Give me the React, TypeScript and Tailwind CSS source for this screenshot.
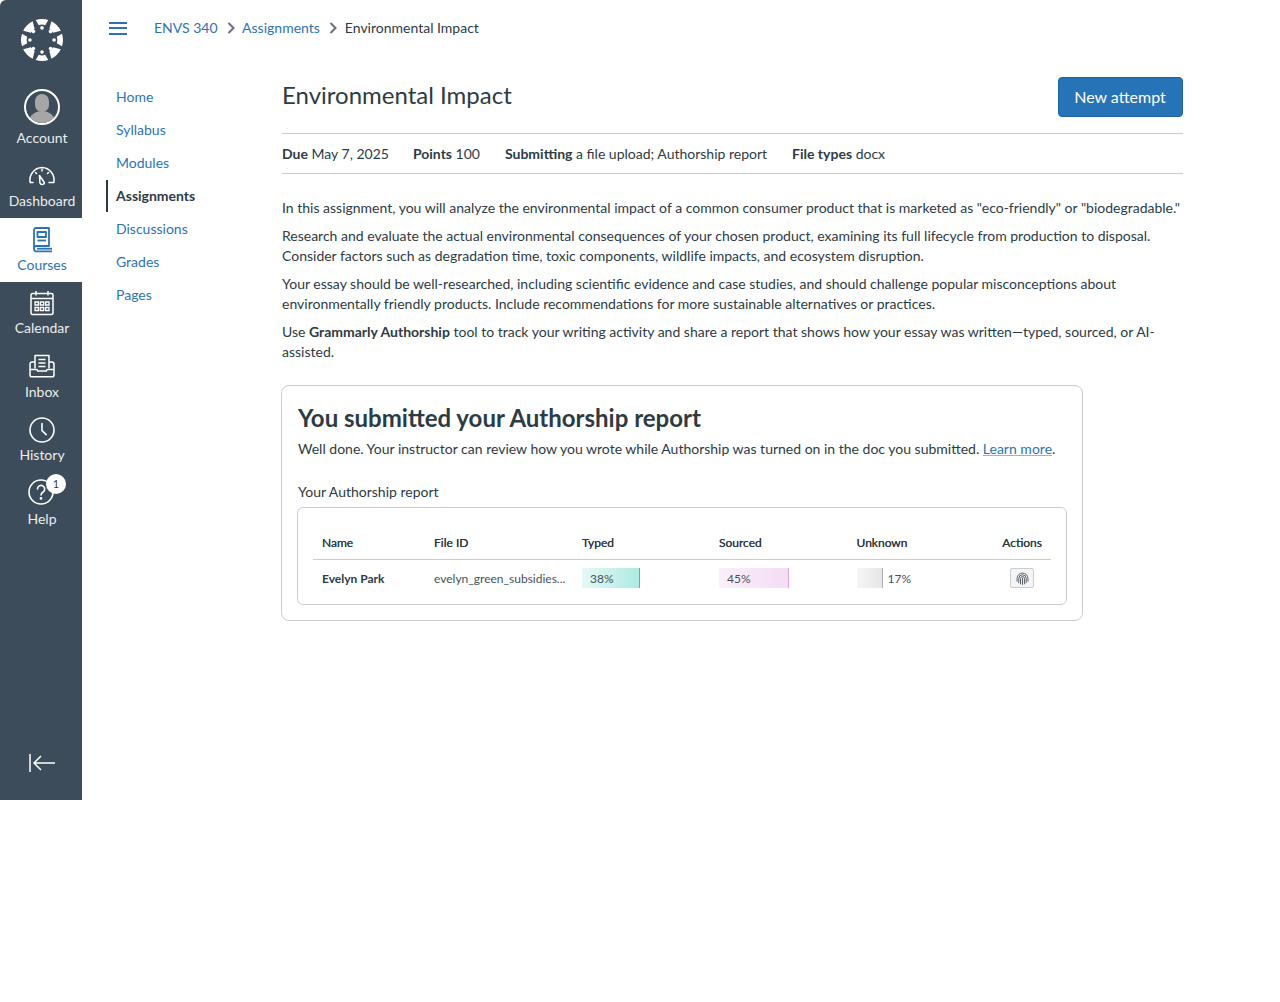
import React from "react";

const Logo = () => (
  <svg width="44" height="44" viewBox="0 0 44 44" fill="#fff">
    {[0, 90, 180, 270].map((a) => (
      <path key={a} transform={`rotate(${a} 22 22)`} d="M15.7 2 A21 21 0 0 1 28.3 2 L25.2 7.2 Q22 6 18.8 7.2 Z" />
    ))}
    {[45, 135, 225, 315].map((a) => (
      <path key={a} transform={`rotate(${a} 22 22)`} d="M15.3 2.1 A21 21 0 0 1 28.7 2.1 L24.6 9 Q22 8.1 19.4 9 Z" />
    ))}
    {[0, 45, 90, 135, 180, 225, 270, 315].map((a) => (
      <circle key={a} cx="22" cy="9.9" r="1.8" transform={`rotate(${a} 22 22)`} />
    ))}
  </svg>
);

const Dashboard = () => (
  <svg width="28" height="24" viewBox="0 0 28 24" fill="none" stroke="currentColor" strokeWidth="1.5" strokeLinecap="round" strokeLinejoin="round">
    <path d="M5 18.5H2.2 A12.5 12.5 0 0 1 14 3.5 A12.5 12.5 0 0 1 25.8 18.5H21" />
    <path d="M11.5 11.5l5 7.2a2.4 2.4 0 0 1-4.6 0z" />
    <path d="M14 5.5v1.5M7.5 8.5l1 1M20.5 8.5l-1 1" />
  </svg>
);

const Courses = () => (
  <svg width="24" height="26" viewBox="0 0 24 26" fill="none" stroke="currentColor" strokeWidth="1.8" strokeLinejoin="round">
    <path d="M4 20.5V3a2 2 0 0 1 2-2h13v18H6a2.5 2.5 0 0 0-2 2.7 2.5 2.5 0 0 0 2 2.6h16" />
    <path d="M7 21.7h15" />
    <rect x="7.5" y="5" width="8.5" height="5" />
    <path d="M7.5 13.5h8.5" />
  </svg>
);

const Calendar = () => (
  <svg width="24" height="26" viewBox="0 0 24 26" fill="none" stroke="currentColor" strokeWidth="1.5">
    <rect x="1" y="3.5" width="22" height="21" rx="1.5" />
    <path d="M1 8.5h22M6 1v4.5M18 1v4.5" />
    <path d="M5 12h3.4v3H5zM10.3 12h3.4v3h-3.4zM15.6 12H19v3h-3.4zM5 17.5h3.4v3H5zM10.3 17.5h3.4v3h-3.4zM15.6 17.5H19v3h-3.4z" strokeWidth="1.3" />
  </svg>
);

const Inbox = () => (
  <svg width="26" height="24" viewBox="0 0 26 24" fill="none" stroke="currentColor" strokeWidth="1.5" strokeLinejoin="round">
    <path d="M6 14.5V1.5h14v13" />
    <path d="M9.5 5.5h7M9.5 9h7M9.5 12.5h7" />
    <path d="M6 8H3.2Q1 8 1 10.5V21a1.8 1.8 0 0 0 1.8 1.8h20.4A1.8 1.8 0 0 0 25 21V10.5Q25 8 22.8 8H20" />
    <path d="M1 15.5h6.5a1 1 0 0 1 1 1v.5h9v-.5a1 1 0 0 1 1-1H25" />
  </svg>
);

const Clock = () => (
  <svg width="26" height="26" viewBox="0 0 26 26" fill="none" stroke="currentColor" strokeWidth="1.6" strokeLinecap="round">
    <circle cx="13" cy="13" r="12" />
    <path d="M13 6.5v7.2l4.2 4" />
  </svg>
);

const Help = () => (
  <svg width="26" height="26" viewBox="0 0 26 26" fill="none" stroke="currentColor" strokeWidth="1.6" strokeLinecap="round">
    <circle cx="13" cy="13" r="12" />
    <path d="M9.5 10a3.6 3.6 0 1 1 5.6 3c-1.4.9-2.1 1.5-2.1 3" />
    <circle cx="13" cy="19.4" r="0.6" fill="currentColor" />
  </svg>
);

const Finger = () => (
  <svg width="13" height="13" viewBox="0 0 12 12" fill="none" stroke="#4a5560" strokeWidth="0.85" strokeLinecap="round">
    <path d="M1 8.5V6a5 5 0 0 1 10 0v2.5" />
    <path d="M2.6 10V6a3.4 3.4 0 0 1 6.8 0v4" />
    <path d="M4.2 11V6a1.8 1.8 0 0 1 3.6 0v5" />
    <path d="M6 11.5V5.8" />
  </svg>
);

const Chevron = () => (
  <svg width="8" height="12" viewBox="0 0 8 12" fill="none" stroke="#66717b" strokeWidth="2">
    <path d="M1.5 1l5 5-5 5" />
  </svg>
);

function NavItem({ icon, label, active, box }: { icon: React.ReactNode; label: string; active?: boolean; box: string }) {
  return (
    <div className={`h-16 pl-[2px] flex flex-col items-center ${box} ${active ? "bg-white text-[#2d73b4]" : "text-white"}`}>
      <div className="h-[30px] flex items-center justify-center">{icon}</div>
      <div className={`text-[14px] leading-[18px] ${active ? "" : "opacity-90"}`}>{label}</div>
    </div>
  );
}

const courseNav = ["Home", "Syllabus", "Modules", "Assignments", "Discussions", "Grades", "Pages"];

export default function App() {
  return (
    <div className="flex min-h-[1002px] bg-white text-[#2d3b45] text-[14px] leading-5" style={{ fontFamily: "Lato, 'Noto Sans', sans-serif" }}>
      <aside className="w-[82px] h-[800px] bg-[#3c4c5a] flex flex-col rounded-tl-[6px] shrink-0">
        <div className="h-[90px] pt-[18px] pl-[2px] flex justify-center shrink-0">
          <div className="h-[44px]"><Logo /></div>
        </div>
        <NavItem
          label="Account"
          box="pt-[2px] gap-[7px]"
          icon={
            <div className="w-9 h-9 rounded-full border-2 border-white bg-[#3c4c5a] overflow-hidden relative">
              <div className="absolute left-[9px] top-[3px] w-[14px] h-[18px] rounded-full bg-[#a6a6a6]" />
              <div className="absolute left-[1px] top-[20px] w-[30px] h-5 rounded-t-full bg-[#a6a6a6]" />
            </div>
          }
        />
        <NavItem label="Dashboard" box="pt-[7px] gap-[1px]" icon={<Dashboard />} />
        <NavItem label="Courses" box="pt-[7px] gap-[1px]" icon={<Courses />} active />
        <NavItem label="Calendar" box="pt-[6px] gap-[1px]" icon={<Calendar />} />
        <NavItem label="Inbox" box="pt-[5px] gap-[2px]" icon={<Inbox />} />
        <NavItem label="History" box="pt-[5px] gap-[1px]" icon={<Clock />} />
        <NavItem
          label="Help"
          box="pt-[3px] gap-[3px]"
          icon={
            <div className="relative -ml-[2px]">
              <Help />
              <div className="absolute -top-[5px] -right-[12px] w-5 h-5 rounded-full bg-white text-[#2d3b45] text-[11px] leading-5 text-center">1</div>
            </div>
          }
        />
        <div className="mt-auto h-[47px] flex justify-center pl-[2px] text-white">
          <svg width="28" height="20" viewBox="0 0 28 20" fill="none" stroke="currentColor" strokeWidth="1.5">
            <path d="M2 1v18M27 10H6M13 3l-7 7 7 7" />
          </svg>
        </div>
      </aside>

      <div className="flex-1 min-w-0">
        <header className="h-[56px] flex items-center pl-[27px]">
          <div className="flex flex-col gap-[3.5px] w-[18px]">
            <div className="h-[2px] bg-[#2d73b4]" />
            <div className="h-[2px] bg-[#2d73b4]" />
            <div className="h-[2px] bg-[#2d73b4]" />
          </div>
          <div className="ml-[27px] text-[#2d73b4]">ENVS 340</div>
          <div className="ml-[9px] mr-[7.5px] flex"><Chevron /></div>
          <div className="text-[#2d73b4]">Assignments</div>
          <div className="ml-[9px] mr-[8px] flex"><Chevron /></div>
          <div>Environmental Impact</div>
        </header>

        <div className="flex">
          <nav className="w-[200px] pl-[24px] pt-[24px] shrink-0">
            {courseNav.map((n) =>
              n === "Assignments" ? (
                <div key={n} className="h-[33px] flex items-center">
                  <div className="h-[32px] flex items-center border-l-2 border-[#2d3b45] pl-[8px] font-bold">{n}</div>
                </div>
              ) : (
                <div key={n} className="h-[33px] flex items-center pl-[10px] text-[#2d73b4]">{n}</div>
              )
            )}
          </nav>

          <main className="w-[901px] pt-[21px]">
            <div className="flex items-start justify-between h-[56px]">
              <h1 className="text-[24px] leading-[36px] font-normal">Environmental Impact</h1>
              <button className="w-[125px] h-[40px] pr-[1px] rounded-[4px] border border-[#1f62a0] bg-[#2773b8] text-white text-[16px]">New attempt</button>
            </div>
            <div className="h-[41px] border-y border-[#c7cdd1] flex items-center gap-[24px]">
              <div><b>Due</b> May 7, 2025</div>
              <div><b>Points</b> 100</div>
              <div className="ml-[1px]"><b>Submitting</b> a file upload; Authorship report</div>
              <div className="ml-[1px]"><b>File types</b> docx</div>
            </div>
            <div className="mt-[24px] flex flex-col gap-2">
              <p>In this assignment, you will analyze the environmental impact of a common consumer product that is marketed as "eco-friendly" or "biodegradable."</p>
              <p>Research and evaluate the actual environmental consequences of your chosen product, examining its full lifecycle from production to disposal. Consider factors such as degradation time, toxic components, wildlife impacts, and ecosystem disruption.</p>
              <p>Your essay should be well-researched, including scientific evidence and case studies, and should challenge popular misconceptions about environmentally friendly products. Include recommendations for more sustainable alternatives or practices.</p>
              <p>Use <b>Grammarly Authorship</b> tool to track your writing activity and share a report that shows how your essay was written—typed, sourced, or AI-assisted.</p>
            </div>

            <section className="mt-[23px] -ml-px w-[802px] h-[236px] border border-[#c7cdd1] rounded-[8px] px-[16px] pt-[16px]">
              <h2 className="text-[24px] leading-[32px] font-bold">You submitted your Authorship report</h2>
              <p className="mt-[5px]">Well done. Your instructor can review how you wrote while Authorship was turned on in the doc you submitted. <span className="text-[#2d73b4] underline decoration-[#8fb5d9]">Learn more</span>.</p>
              <p className="mt-[23px]">Your Authorship report</p>
              <div className="mt-[5px] -ml-px w-[770px] h-[98px] border border-[#c7cdd1] rounded-[6px] px-[15px] pt-[24px] text-[12px]">
                <div className="h-[28px] border-b border-[#c7cdd1] flex items-start leading-[21px] [text-shadow:0_0_0.4px_#2d3b45]">
                  <div className="w-[121px] pl-[9px]">Name</div>
                  <div className="w-[148px]">File ID</div>
                  <div className="w-[137px]">Typed</div>
                  <div className="w-[137.5px]">Sourced</div>
                  <div className="w-[137px]">Unknown</div>
                  <div className="flex-1 pr-[9px] text-right">Actions</div>
                </div>
                <div className="h-[38px] flex items-center">
                  <div className="w-[121px] pl-[9px] font-bold">Evelyn Park</div>
                  <div className="w-[148px] text-[#45525c]">evelyn_green_subsidies...</div>
                  <div className="w-[137px] -mt-[2px]">
                    <div className="w-[58px] h-5 pl-2 border-r border-[#5fb0ac] bg-gradient-to-r from-[#e6f8f6] to-[#aeeae2] text-[#45525c] leading-[22px]">38%</div>
                  </div>
                  <div className="w-[137.5px] -mt-[2px]">
                    <div className="w-[70px] h-5 pl-2 border-r border-[#dba8dc] bg-gradient-to-r from-[#faf0fa] to-[#f5dcf4] text-[#45525c] leading-[22px]">45%</div>
                  </div>
                  <div className="w-[137px] flex items-center">
                    <div className="w-[26px] h-5 -mt-[2px] border-r border-[#a9afb4] bg-gradient-to-r from-[#f5f5f5] to-[#e6e7e8]" />
                    <div className="ml-[5px] text-[#45525c]">17%</div>
                  </div>
                  <div className="flex-1 flex justify-end pr-[17px] -mt-[2px]">
                    <div className="w-6 h-5 rounded-[2px] border border-[#c7cdd1] bg-[#f5f5f5] flex items-center justify-center"><Finger /></div>
                  </div>
                </div>
              </div>
            </section>
          </main>
        </div>
      </div>
    </div>
  );
}
